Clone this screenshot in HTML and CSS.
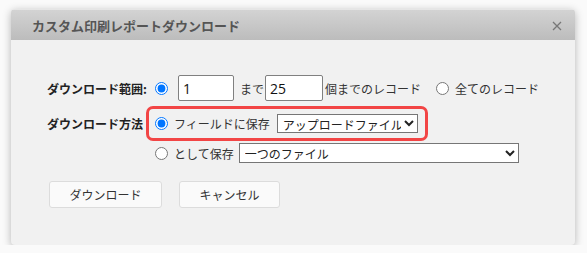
FILE: index.html
```html
<!DOCTYPE html>
<html lang="ja">
<head>
  <meta charset="UTF-8">
  <meta name="viewport" content="width=device-width, initial-scale=1.0">
  <title>カスタム印刷レポートダウンロード</title>
  <link rel="stylesheet" href="styles.css">
</head>
<body>
  <div class="dialog">
    <div class="titlebar">
      <span class="title">カスタム印刷レポートダウンロード</span>
      <svg class="close" width="10" height="10" viewBox="0 0 10 10">
        <path d="M1 1 L9 9 M9 1 L1 9" stroke="#777" stroke-width="1.3" fill="none"/>
      </svg>
    </div>

    <div class="content">
      <div class="row range">
        <div class="label">ダウンロード範囲:</div>
        <input type="radio" name="range" class="radio" checked>
        <input type="text" class="num first" value="1">
        <span class="txt upto">まで</span>
        <input type="text" class="num second" value="25">
        <span class="txt">個までのレコード</span>
        <input type="radio" name="range" class="radio all">
        <span class="txt after">全てのレコード</span>
      </div>

      <div class="row method">
        <div class="label">ダウンロード方法</div>
        <div class="highlight">
          <input type="radio" name="method" class="radio" checked>
          <span class="txt after">フィールドに保存</span>
          <select class="pick short">
            <option>アップロードファイル</option>
          </select>
        </div>
      </div>

      <div class="row save">
        <div class="label"></div>
        <input type="radio" name="method" class="radio">
        <span class="txt after">として保存</span>
        <select class="pick long">
          <option>一つのファイル</option>
        </select>
      </div>

      <div class="actions">
        <button class="btn download">ダウンロード</button>
        <button class="btn cancel">キャンセル</button>
      </div>
    </div>
  </div>
</body>
</html>
```

FILE: styles.css
```css
body {
  margin: 0;
  background: #fafafa;
  font-family: "Noto Sans CJK JP", "Noto Sans", sans-serif;
  font-size: 12px;
  color: #222;
}

.dialog {
  margin: 9px 0 0 11px;
  width: 564px;
  height: 236px;
  background: #f1f1f1;
  border-radius: 4px;
  box-shadow: 0 2px 9px rgba(0, 0, 0, 0.28);
  overflow: hidden;
}

.titlebar {
  height: 31px;
  display: flex;
  align-items: center;
  justify-content: space-between;
  padding: 0 13px 0 21px;
  background: linear-gradient(#d3d3d3, #bcbcbc);
  border-top: 1px solid #e6e6e6;
  box-sizing: border-box;
}

.title {
  font-size: 13px;
  font-weight: 700;
  color: #555;
}

.close {
  margin-top: 1px;
}

.content {
  padding: 35px 0 0 36px;
}

.row {
  display: flex;
  align-items: center;
}

.label {
  width: 100px;
  font-weight: 700;
  color: #222;
  flex-shrink: 0;
}

.range {
  height: 26px;
  margin-bottom: 5px;
}

.radio {
  margin: 0 0 0 8px;
  width: 13px;
  height: 13px;
  flex-shrink: 0;
}

.txt {
  color: #333;
  white-space: nowrap;
}

.after {
  margin-left: 6px;
}

.num {
  box-sizing: border-box;
  height: 26px;
  padding: 0 4px;
  border: 1px solid #808080;
  border-radius: 2px;
  background: #fff;
  font-family: "Open Sans", "Noto Sans", sans-serif;
  font-size: 14px;
  color: #111;
}

.first {
  width: 56px;
  margin-left: 10px;
}

.upto {
  margin: 0 1px 0 6px;
}

.second {
  width: 58px;
  margin-right: 2px;
}

.all {
  margin-left: 15px;
}

.method {
  height: 35px;
  margin-bottom: 2px;
}

.highlight {
  box-sizing: border-box;
  height: 35px;
  margin-left: -1px;
  padding: 0 7px 0 6px;
  display: flex;
  align-items: center;
  border: 3px solid #f24545;
  border-radius: 7px;
}

.highlight .radio {
  margin-left: 0;
}

.pick {
  box-sizing: border-box;
  border: 1px solid #767676;
  border-radius: 0;
  background: #fff;
  font-family: "Noto Sans CJK JP", sans-serif;
  font-size: 12px;
  color: #222;
  padding: 0 0 0 1px;
}

.short {
  width: 141px;
  height: 19px;
  margin-left: 7px;
}

.save {
  height: 20px;
  margin-bottom: 18px;
}

.long {
  width: 280px;
  height: 20px;
  margin-left: 5px;
}

.actions {
  display: flex;
  margin-left: 2px;
}

.btn {
  height: 27px;
  border: 1px solid #dcdcdc;
  border-radius: 3px;
  background: #fafafa;
  font-family: "Noto Sans CJK JP", sans-serif;
  font-size: 12px;
  color: #333;
  cursor: pointer;
}

.download {
  width: 113px;
}

.cancel {
  width: 101px;
  margin-left: 17px;
}
```
